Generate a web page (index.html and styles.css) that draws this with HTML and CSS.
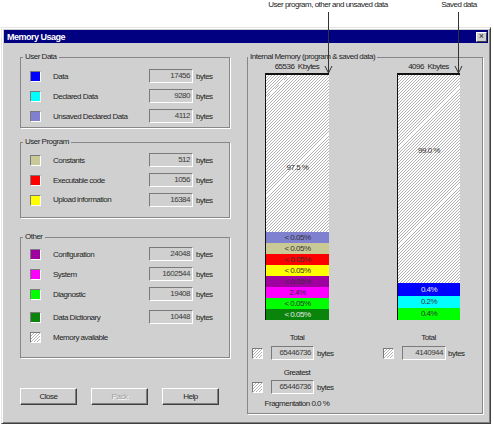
FILE: index.html
```html
<!DOCTYPE html>
<html>
<head>
<meta charset="utf-8">
<title>Memory Usage</title>
<link rel="stylesheet" href="styles.css">
</head>
<body>
<div class="page">
  <div class="callouts">
    <span class="callout c1">User program, other and unsaved data</span>
    <span class="callout c2">Saved data</span>
  </div>
  <svg class="arrows" width="494" height="80" viewBox="0 0 494 80">
    <g stroke="#333" stroke-width="1" fill="none">
      <line x1="328.5" y1="12" x2="328.5" y2="73"/>
      <polyline points="325,66 328.5,73 332,66"/>
      <line x1="458.5" y1="12" x2="458.5" y2="73"/>
      <polyline points="455,66 458.5,73 462,66"/>
    </g>
  </svg>
  <div class="window">
    <div class="titlebar">
      <span class="title">Memory Usage</span>
      <span class="xbtn">×</span>
    </div>
    <div class="body">
      <div class="leftcol">
        <fieldset class="group g-user">
          <legend>User Data</legend>
          <div class="row"><span class="sw c-blue"></span><span class="lbl">Data</span><span class="val">17456</span><span class="unit">bytes</span></div>
          <div class="row"><span class="sw c-cyan"></span><span class="lbl">Declared Data</span><span class="val">9280</span><span class="unit">bytes</span></div>
          <div class="row"><span class="sw c-lav"></span><span class="lbl">Unsaved Declared Data</span><span class="val">4112</span><span class="unit">bytes</span></div>
        </fieldset>
        <fieldset class="group g-prog">
          <legend>User Program</legend>
          <div class="row"><span class="sw c-khaki"></span><span class="lbl">Constants</span><span class="val">512</span><span class="unit">bytes</span></div>
          <div class="row"><span class="sw c-red"></span><span class="lbl">Executable code</span><span class="val">1056</span><span class="unit">bytes</span></div>
          <div class="row"><span class="sw c-yellow"></span><span class="lbl up">Upload information</span><span class="val">16384</span><span class="unit">bytes</span></div>
        </fieldset>
        <fieldset class="group g-other">
          <legend>Other</legend>
          <div class="row"><span class="sw c-purple"></span><span class="lbl">Configuration</span><span class="val">24048</span><span class="unit">bytes</span></div>
          <div class="row"><span class="sw c-magenta"></span><span class="lbl">System</span><span class="val">1602544</span><span class="unit">bytes</span></div>
          <div class="row"><span class="sw c-green"></span><span class="lbl">Diagnostic</span><span class="val">19408</span><span class="unit">bytes</span></div>
          <div class="row row-dict"><span class="sw c-dgreen"></span><span class="lbl">Data Dictionary</span><span class="val">10448</span><span class="unit">bytes</span></div>
          <div class="row"><span class="sw hatch"></span><span class="lbl">Memory available</span></div>
        </fieldset>
        <div class="buttons">
          <span class="btn">Close</span>
          <span class="btn disabled">Pack</span>
          <span class="btn">Help</span>
        </div>
      </div>
      <fieldset class="group g-mem">
        <legend>Internal Memory (program &amp; saved data)</legend>
        <div class="memcols">
          <div class="memcol mc-left">
            <div class="cap">65536&nbsp;&nbsp;Kbytes</div>
            <div class="bar">
              <div class="hatch fill"><div class="pct p-left">97.5 %</div></div>
              <div class="seg c-lav">&lt; 0.05%</div>
              <div class="seg c-khaki">&lt; 0.05%</div>
              <div class="seg c-red">&lt; 0.05%</div>
              <div class="seg c-yellow">&lt; 0.05%</div>
              <div class="seg c-purple">&lt; 0.05%</div>
              <div class="seg c-magenta">2.4%</div>
              <div class="seg c-green">&lt; 0.05%</div>
              <div class="seg c-dgreen light">&lt; 0.05%</div>
            </div>
            <div class="cap tcap">Total</div>
            <div class="valrow"><span class="sw hatch"></span><span class="val v-mem">65446736</span><span class="unit">bytes</span></div>
            <div class="cap gcap">Greatest</div>
            <div class="valrow vr2"><span class="sw hatch"></span><span class="val v-mem">65446736</span><span class="unit">bytes</span></div>
            <div class="frag">Fragmentation 0.0 %</div>
          </div>
          <div class="memcol mc-right">
            <div class="cap">4096&nbsp;&nbsp;Kbytes</div>
            <div class="bar">
              <div class="hatch fill"><div class="pct p-right">99.0 %</div></div>
              <div class="seg s13 c-blue light">0.4%</div>
              <div class="seg s12 c-cyan">0.2%</div>
              <div class="seg s12 c-green">0.4%</div>
            </div>
            <div class="cap tcap">Total</div>
            <div class="valrow"><span class="sw hatch"></span><span class="val v-saved">4140944</span><span class="unit">bytes</span></div>
          </div>
        </div>
      </fieldset>
    </div>
  </div>
</div>
</body>
</html>
```
FILE: styles.css
```css
* { box-sizing: border-box; }

body {
  margin: 0;
  background: #fff;
  font-family: "Liberation Sans", Arial, sans-serif;
  font-size: 8px;
  letter-spacing: -0.5px;
  color: #1e1e1e;
}

.page {
  position: relative;
  width: 494px;
  height: 427px;
}

/* callouts above the window */
.callouts {
  display: flex;
  height: 27px;
  line-height: 10px;
  color: #222;
}
.callout { text-align: center; white-space: nowrap; }
.c1 { margin-left: 268px; width: 120px; }
.c2 { margin-left: 41px; width: 60px; }

.arrows {
  position: absolute;
  left: 0;
  top: 0;
  pointer-events: none;
  z-index: 5;
}

/* window frame */
.window {
  margin-left: 1px;
  width: 490px;
  height: 397px;
  background: #d0d0d0;
  border: 1px solid;
  border-color: #e6e6e6 #404040 #404040 #e6e6e6;
  box-shadow: inset 1px 1px 0 #fff, inset -1px -1px 0 #808080;
  padding: 2px;
}

.titlebar {
  height: 13px;
  background: #000080;
  display: flex;
  align-items: center;
  justify-content: space-between;
  padding: 0 1px 0 3px;
}
.title {
  color: #fff;
  font-weight: bold;
  font-size: 9px;
  letter-spacing: -0.5px;
}
.xbtn {
  width: 11px;
  height: 10px;
  background: #d0d0d0;
  border: 1px solid;
  border-color: #fff #404040 #404040 #fff;
  font-size: 9px;
  line-height: 7px;
  text-align: center;
  color: #222;
  letter-spacing: 0;
}

.body {
  display: flex;
  align-items: flex-start;
  padding: 9px 5px 0 16px;
}

.leftcol {
  width: 211px;
  display: flex;
  flex-direction: column;
}

/* group boxes */
.group {
  margin: 0;
  padding: 0;
  min-width: 0;
  border: 1px solid #878787;
  box-shadow: 1px 1px 0 #fff;
}
.group legend {
  padding: 0 2px;
  margin-left: 2px;
  height: 10px;
  line-height: 10px;
  white-space: nowrap;
}
.g-user, .g-prog, .g-other { width: 210px; }
.g-user { padding-top: 4px; padding-bottom: 1px; }
.g-prog { margin-top: 9px; padding-top: 3px; padding-bottom: 7px; }
.g-other { margin-top: 14px; padding-top: 2px; padding-bottom: 10px; }

.row {
  display: flex;
  align-items: center;
  height: 20px;
  padding-left: 9px;
}
.row-dict { margin-top: 3px; }

.sw {
  flex: none;
  width: 11px;
  height: 11px;
  border: 1px solid;
  border-color: #7a7a7a #fff #fff #7a7a7a;
}
.lbl {
  margin-left: 12px;
  width: 96px;
  white-space: nowrap;
}
.lbl.up { position: relative; top: -1px; }

.val {
  flex: none;
  width: 44px;
  height: 14px;
  border: 1px solid;
  border-color: #7a7a7a #fff #fff #7a7a7a;
  text-align: right;
  padding-right: 2px;
  line-height: 12px;
  color: #3a3a3a;
}
.unit { margin-left: 3px; white-space: nowrap; }

/* colours */
.c-blue { background: #0000ff; }
.c-cyan { background: #00ffff; }
.c-lav { background: #8080d0; }
.c-khaki { background: #c9c996; }
.c-red { background: #ff0000; }
.c-yellow { background: #ffff00; }
.c-purple { background: #a000a0; }
.c-magenta { background: #ff00ff; }
.c-green { background: #00ff00; }
.c-dgreen { background: #0a840a; }

.hatch {
  background: repeating-linear-gradient(-45deg, #b2b2b2 0 0.7px, #fff 0.7px 2.1px);
}

/* buttons */
.buttons {
  display: flex;
  gap: 14px;
  margin-top: 30px;
}
.btn {
  width: 57px;
  height: 17px;
  border: 1px solid;
  border-color: #fff #404040 #404040 #fff;
  box-shadow: inset -1px -1px 0 #808080;
  text-align: center;
  line-height: 15px;
  color: #222;
}
.btn.disabled {
  color: #a0a0a0;
  text-shadow: 1px 1px 0 #fff;
}

/* memory group */
.g-mem {
  margin-left: 16px;
  width: 236px;
  padding-bottom: 4px;
}
.g-mem legend { margin-left: 0; }

.memcols { display: flex; align-items: flex-start; }
.memcol { display: flex; flex-direction: column; }
.mc-left { width: 135px; padding-left: 4px; }

.cap {
  margin-left: 13px;
  width: 64px;
  height: 11px;
  line-height: 10px;
  text-align: center;
  white-space: nowrap;
}
.mc-right .cap { margin-left: 14px; width: 63px; }

.bar {
  margin-left: 13px;
  width: 64px;
  height: 247px;
  border-top: 2px solid #111;
  border-left: 1px solid #111;
  display: flex;
  flex-direction: column;
}
.mc-right .bar { margin-left: 14px; width: 63px; }

.fill { flex: 1; }
.pct { text-align: center; line-height: 10px; color: #333; }
.p-left { padding-top: 88px; }
.p-right { padding-top: 71px; }

.seg {
  height: 11px;
  line-height: 11px;
  text-align: center;
  color: #333;
  white-space: nowrap;
}
.seg.s13 { height: 13px; line-height: 13px; }
.seg.s12 { height: 12px; line-height: 12px; }
.seg.light { color: #e8e8e8; }

.tcap { margin-top: 13px; height: 10px; }
.gcap { margin-top: 8px; height: 10px; }

.valrow {
  display: flex;
  align-items: center;
  height: 14px;
  margin-top: 3px;
}
.valrow.vr2 { margin-top: 2px; }
.v-mem { margin-left: 8px; width: 43px; }
.v-saved { margin-left: 8px; width: 44px; }
.mc-right .unit { margin-left: 2px; }

.frag {
  margin-top: 5px;
  width: 90px;
  line-height: 10px;
  text-align: center;
  white-space: nowrap;
}
```
